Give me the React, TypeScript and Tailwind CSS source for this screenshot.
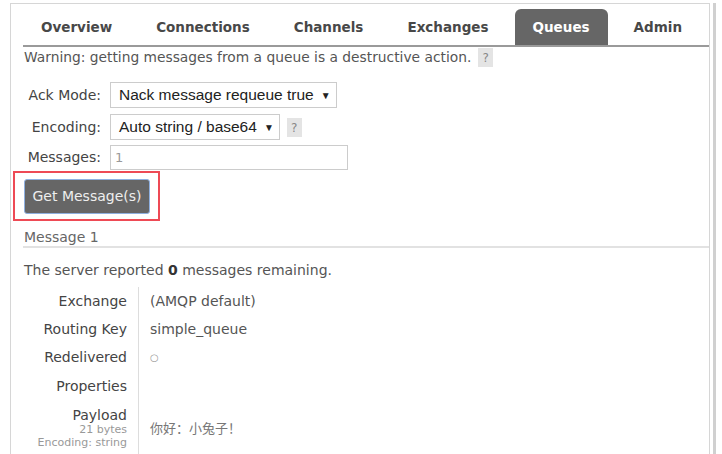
import { useState } from "react";

const tabs = ["Overview", "Connections", "Channels", "Exchanges", "Queues", "Admin"];

const verdana = "font-['DejaVu_Sans',Verdana,sans-serif]";

function Help() {
  return (
    <span className="inline-flex h-[19px] w-[15px] items-center justify-center bg-[#e4e4e4] text-[12px] text-[#888]">
      ?
    </span>
  );
}

function Row({ label, h, children }: { label: React.ReactNode; h: string; children?: React.ReactNode }) {
  return (
    <>
      <div className={`flex items-center justify-end border-r border-[#ddd] pr-[11px] text-[14px] text-[#444] ${h}`}>
        {label}
      </div>
      <div className={`flex items-center pl-[11px] text-[14px] text-[#555] ${h}`}>{children}</div>
    </>
  );
}

export default function App() {
  const [count, setCount] = useState("1");

  return (
    <div className={`flex h-[454px] w-[722px] overflow-hidden bg-white pl-[10px] pt-[3px] ${verdana}`}>
      <div className="w-[700px] shrink-0 border-l border-r border-t border-[#d6d6d6] pl-[12px]">
        {/* tabs */}
        <div className="flex gap-[8px] border-b-2 border-[#9a9a9a] pt-[5px]">
          {tabs.map((t) => (
            <div
              key={t}
              className={`flex h-[36px] items-center rounded-t-[6px] px-[18px] text-[13.5px] font-bold ${
                t === "Queues" ? "bg-[#666] text-white" : "text-[#484848]"
              }`}
            >
              {t}
            </div>
          ))}
        </div>

        <div className="flex h-[21px] items-center gap-[7px] pl-[1px] text-[13.8px] text-[#555]">
          Warning: getting messages from a queue is a destructive action.
          <Help />
        </div>

        {/* form */}
        <div className="mt-[14px] flex flex-col gap-[6px] text-[14px] text-[#444]">
          <div className="flex items-center">
            <span className="w-[78px] text-right">Ack Mode:</span>
            <div className="ml-[9px] flex h-[26px] shrink-0 items-center gap-[7px] whitespace-nowrap border border-[#ccc] pl-[8px] pr-[5px] font-['Liberation_Sans',Arial,sans-serif] text-[15.5px] text-[#222]">
              Nack message requeue true <span className="text-[10px]">▼</span>
            </div>
          </div>
          <div className="flex items-center">
            <span className="w-[78px] text-right">Encoding:</span>
            <div className="ml-[9px] flex h-[26px] shrink-0 items-center gap-[7px] whitespace-nowrap border border-[#ccc] pl-[8px] pr-[5px] font-['Liberation_Sans',Arial,sans-serif] text-[15.5px] text-[#222]">
              Auto string / base64 <span className="text-[10px]">▼</span>
            </div>
            <span className="ml-[7px]">
              <Help />
            </span>
          </div>
          <div className="-mt-[1px] flex items-center">
            <span className="w-[78px] text-right">Messages:</span>
            <input
              value={count}
              onChange={(e) => setCount(e.target.value)}
              className="ml-[9px] h-[25px] w-[238px] border border-[#ccc] px-[4px] text-[13px] text-[#999] outline-none"
            />
          </div>
        </div>

        <div className="mt-[9px] pl-[1px]">
          <button className="relative h-[35px] w-[126px] rounded-[3px] border border-[#8fb0e0] bg-[#666] text-[14px] text-[#eee]">
            Get Message(s)
            <span className="absolute -bottom-[8px] -left-[12px] -right-[11px] -top-[9px] border-2 border-[#ee4a55]" />
          </button>
        </div>

        <div className="mt-[14px] border-b-2 border-[#e2e2e2] pl-[1px] text-[14px] leading-[18px] text-[#666]">
          Message 1
        </div>

        <div className="mt-[12px] pl-[1px] text-[14px] leading-[20px] text-[#555]">
          The server reported <b className="text-[#333]">0</b> messages remaining.
        </div>

        <div className="mt-[7px] grid grid-cols-[115px_1fr] pl-[1px]">
          <Row label="Exchange" h="h-[28px]">(AMQP default)</Row>
          <Row label="Routing Key" h="h-[28px]">simple_queue</Row>
          <Row label="Redelivered" h="h-[28px]">
            <span className="text-[10px] text-[#999]">○</span>
          </Row>
          <Row label="Properties" h="h-[30px]" />
          <div className="flex flex-col items-end border-r border-[#ddd] pb-[6px] pr-[11px] pt-[6px]">
            <span className="text-[14px] leading-[16px] text-[#444]">Payload</span>
            <span className="text-[11px] leading-[13px] text-[#999]">21 bytes</span>
            <span className="text-[11px] leading-[13px] text-[#999]">Encoding: string</span>
          </div>
          <div className="flex items-center pl-[11px] font-['Noto_Sans_CJK_SC',serif] text-[13px] text-[#777]">
            你好：小兔子！
          </div>
        </div>
      </div>
      <div className="ml-[3px] h-full w-[3px] shrink-0 bg-[#d0d0d0]" />
    </div>
  );
}
